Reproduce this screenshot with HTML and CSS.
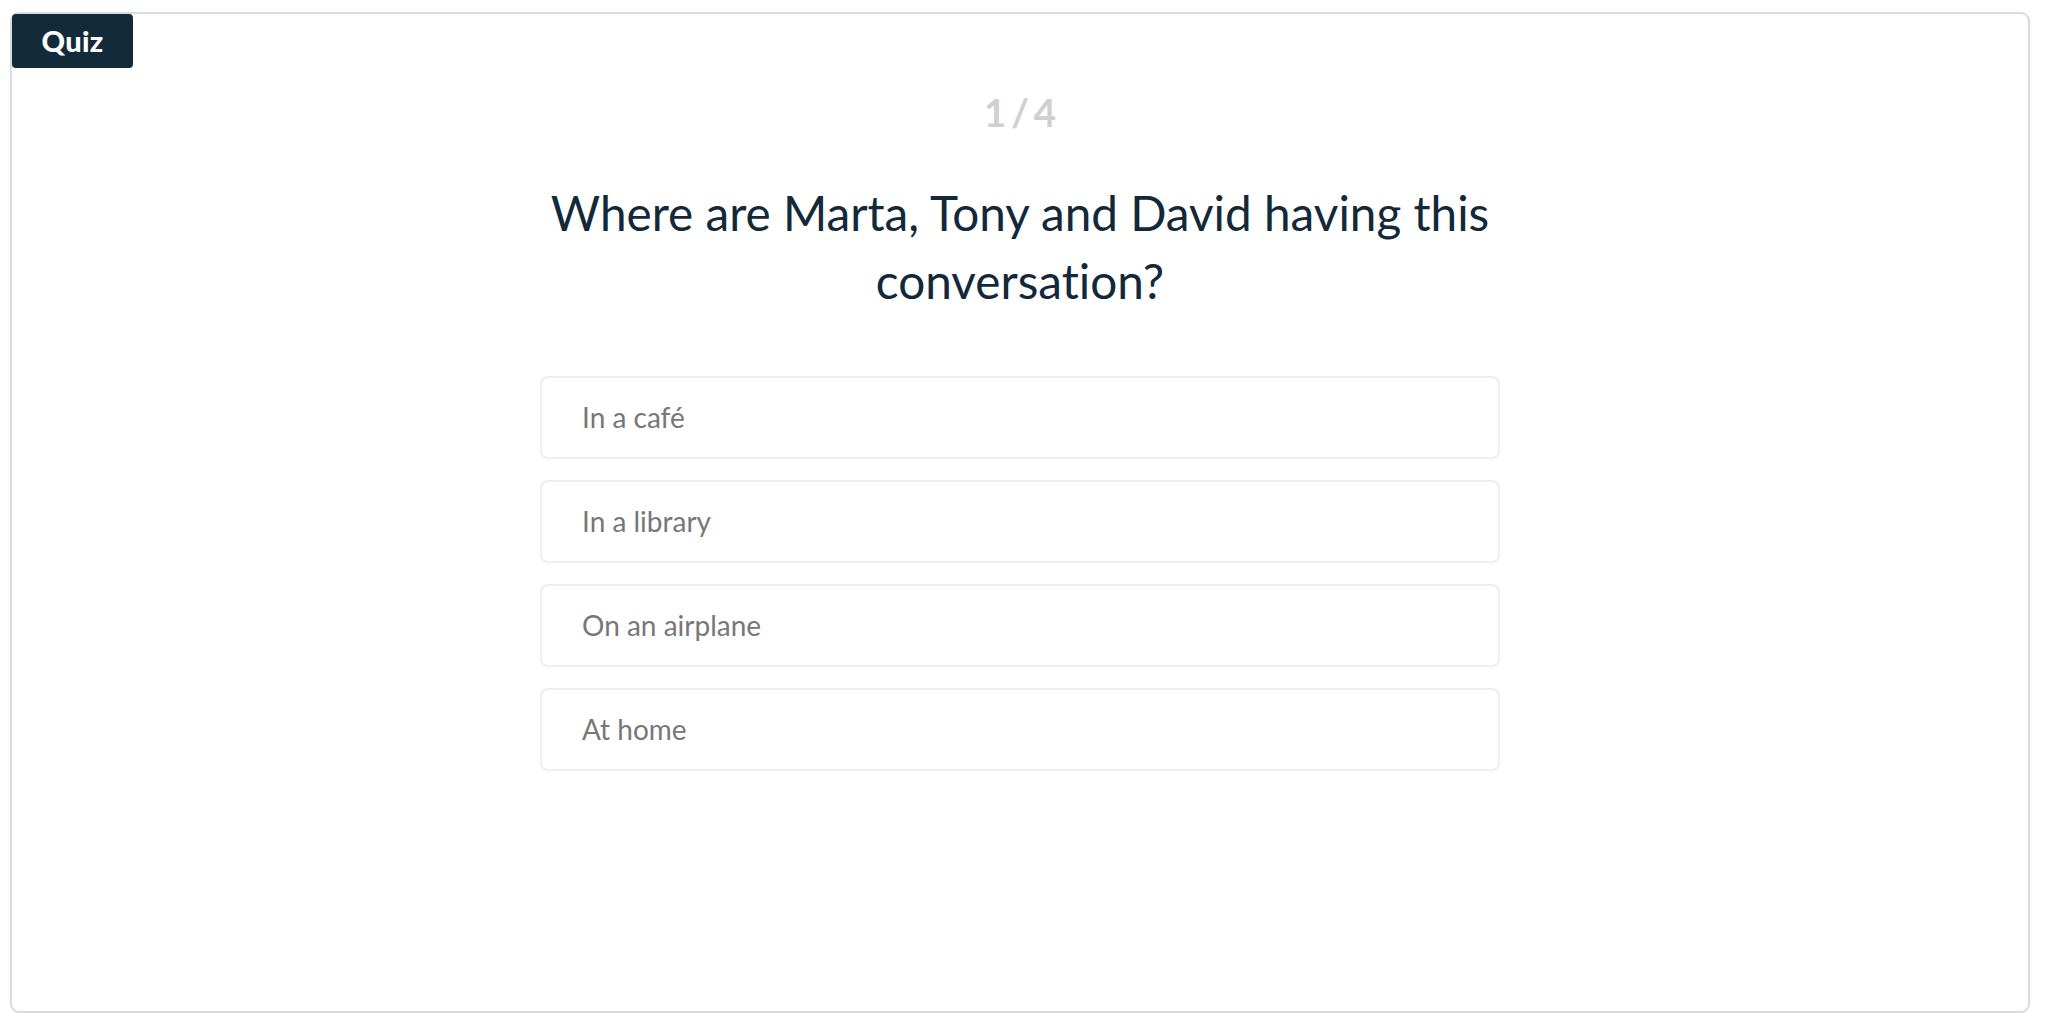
FILE: index.html
```html
<!DOCTYPE html>
<html lang="en">
<head>
<meta charset="utf-8">
<title>Quiz</title>
<link rel="stylesheet" href="styles.css">
</head>
<body>
<div class="frame">
  <div class="badge">Quiz</div>
  <div class="content">
    <div class="counter">1 / 4</div>
    <h1 class="question">Where are Marta, Tony and David having this conversation?</h1>
    <ul class="options">
      <li class="option">In a café</li>
      <li class="option">In a library</li>
      <li class="option">On an airplane</li>
      <li class="option">At home</li>
    </ul>
  </div>
</div>
</body>
</html>
```

FILE: styles.css
```css
html, body {
  margin: 0;
  padding: 0;
  background: #ffffff;
}
body {
  font-family: "Lato", "Liberation Sans", sans-serif;
  font-variant-ligatures: none;
  padding: 12px 18px 13px 10px;
}
.frame {
  position: relative;
  box-sizing: border-box;
  height: 1001px;
  border: 2px solid #d9dcdc;
  border-radius: 9px;
}
.badge {
  position: absolute;
  top: 0;
  left: 0;
  width: 121px;
  height: 54px;
  box-sizing: border-box;
  background: #132a3a;
  color: #ffffff;
  border-radius: 4px;
  font-weight: 900;
  font-size: 29px;
  line-height: 54px;
  text-align: center;
  letter-spacing: 0.3px;
}
.content {
  width: 960px;
  margin: 0 auto;
  padding-top: 74px;
  display: flex;
  flex-direction: column;
  align-items: stretch;
}
.counter {
  text-align: center;
  font-size: 39px;
  font-weight: 700;
  line-height: 48px;
  word-spacing: -5px;
  color: #d0d0d0;
}
.question {
  margin: 43px 0 0 0;
  text-align: center;
  font-weight: 400;
  font-size: 47.7px;
  line-height: 68px;
  color: #13293a;
}
.options {
  list-style: none;
  margin: 61px 0 0 0;
  padding: 0;
  display: flex;
  flex-direction: column;
  gap: 21px;
}
.option {
  box-sizing: border-box;
  height: 83px;
  border: 2px solid #eeeeee;
  border-radius: 8px;
  padding-left: 40px;
  padding-bottom: 1px;
  display: flex;
  align-items: center;
  font-size: 28px;
  color: #777777;
}
```
